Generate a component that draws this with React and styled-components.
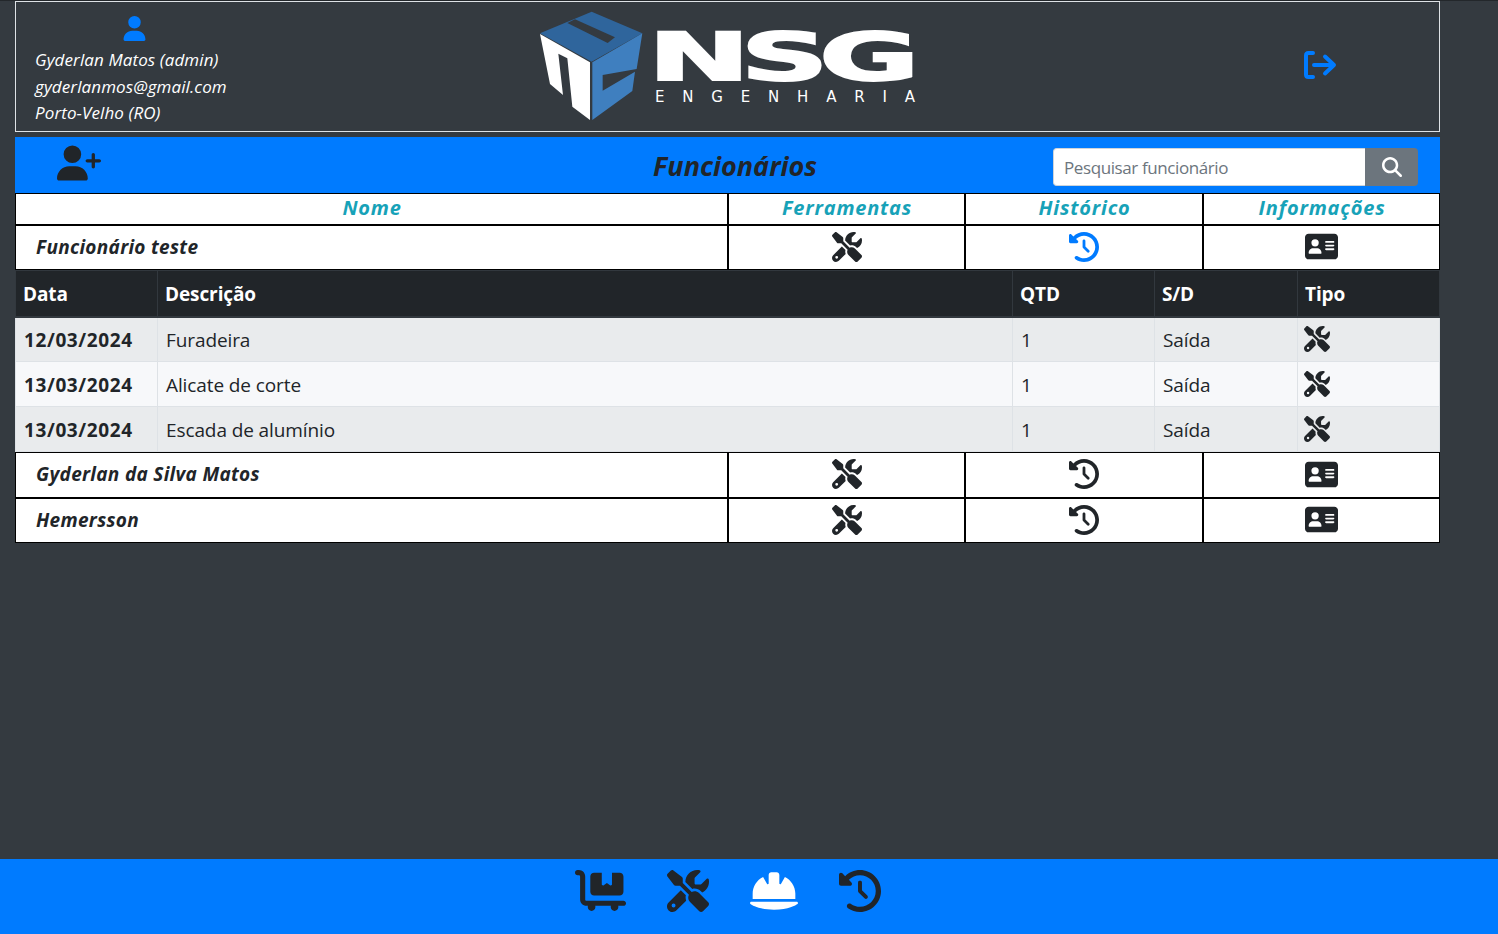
import React from "react";
import styled, { createGlobalStyle } from "styled-components";
import {
  FaUser,
  FaUserPlus,
  FaScrewdriverWrench,
  FaClockRotateLeft,
  FaAddressCard,
  FaCartFlatbed,
  FaHelmetSafety,
  FaMagnifyingGlass,
} from "react-icons/fa6";

const GlobalStyle = createGlobalStyle`
  html, body {
    margin: 0;
    padding: 0;
    height: 100%;
    background: #343a40;
  }
  body {
    font-family: "Open Sans", "Noto Sans", "Liberation Sans", sans-serif;
    font-size: 16px;
    color: #212529;
  }
  * { box-sizing: border-box; }
`;

const Page = styled.div`
  width: 1498px;
  height: 934px;
  display: flex;
  flex-direction: column;
  overflow: hidden;
  border-top: 1px solid #23272b;
`;

const Content = styled.main`
  flex: 1;
  width: 1425px;
  margin-left: 15px;
`;

const Header = styled.header`
  height: 131px;
  border: 1px solid #dee2e6;
  display: grid;
  grid-template-columns: 504px 420px 1fr;
  align-items: center;
`;

const UserInfo = styled.div`
  padding: 11px 0 0 19px;
  color: #fff;
  font-size: 17px;
  font-style: italic;
  letter-spacing: 0.1px;
  line-height: 26.5px;
`;

const UserIcon = styled.div`
  width: 198px;
  height: 30px;
  margin-top: -1px;
  margin-bottom: 1px;
  display: flex;
  justify-content: center;
  font-size: 25px;
  color: #007bff;
`;

const LogoBox = styled.div`
  height: 129px;
  display: flex;
  align-items: center;
`;

const Logout = styled.div`
  display: flex;
  justify-content: center;
  padding: 0 0 4px 261px;
  color: #007bff;
`;

const TitleBar = styled.div`
  margin-top: 5px;
  height: 56px;
  padding-top: 3px;
  background: #007bff;
  display: grid;
  grid-template-columns: 1037px 1fr;
  align-items: center;
`;

const TitleLeft = styled.div`
  display: flex;
  align-items: center;
`;

const AddUser = styled.span`
  display: flex;
  margin: -7px 0 0 42px;
  font-size: 44px;
  color: #212529;
`;

const Title = styled.h1`
  margin: -2px 0 0 552px;
  font-size: 27px;
  font-style: italic;
  font-weight: 700;
  color: #212529;
`;

const Search = styled.div`
  display: flex;
  width: 365px;
  height: 38px;
  margin-left: 1px;
`;

const SearchInput = styled.input`
  flex: 1;
  min-width: 0;
  border: 1px solid #ced4da;
  border-right: none;
  border-radius: 4px 0 0 4px;
  padding: 2px 10px 0;
  font: 400 17px "Open Sans", sans-serif;
  letter-spacing: -0.4px;
  &::placeholder { color: #6c757d; opacity: 1; }
`;

const SearchButton = styled.button`
  width: 53px;
  border: 0;
  border-radius: 0 4px 4px 0;
  background: #6c757d;
  color: #fff;
  font-size: 20px;
  display: flex;
  align-items: center;
  justify-content: center;
  padding: 0;
`;

const StaffTable = styled.div`
  background: #fff;
`;

const StaffRow = styled.div`
  display: grid;
  grid-template-columns: 711px 237px 238px 237px;
  height: ${(p) => p.$height}px;
  border-left: 1px solid #000;
  border-right: 1px solid #000;
  border-top: ${(p) => p.$top}px solid #000;
  border-bottom: ${(p) => p.$bottom}px solid #000;
`;

const StaffCell = styled.div`
  display: flex;
  align-items: center;
  justify-content: center;
  padding-bottom: 2px;
  font-size: 30px;
  color: ${(p) => (p.$active ? "#007bff" : "#212529")};
  & + & { border-left: 2px solid #000; }
`;

const HeadLabel = styled.span`
  margin: 0 0 1px 1px;
  font-size: 20px;
  font-style: italic;
  font-weight: 700;
  letter-spacing: 0.8px;
  color: #17a2b8;
`;

const StaffName = styled.div`
  width: 100%;
  padding-left: 20px;
  font-size: 19px;
  font-style: italic;
  font-weight: 700;
  letter-spacing: 0.3px;
  color: #212529;
`;

const Movements = styled.table`
  width: 100%;
  border-collapse: collapse;
  table-layout: fixed;
  font-size: 19px;
  letter-spacing: -0.1px;
`;

const Th = styled.th`
  height: 46px;
  padding: 2px 7px 0;
  text-align: left;
  font-weight: 700;
  background: #212529;
  color: #fff;
  border: 1px solid #32383e;
  border-bottom-width: 2px;
  font-size: 19px;
`;

const Td = styled.td`
  height: 45px;
  padding: 2px 8px 0;
  border: 1px solid #dee2e6;
  background: ${(p) => (p.$odd ? "#e9ebed" : "#f7f8fa")};
  font-weight: ${(p) => (p.$strong ? 700 : 400)};
  letter-spacing: ${(p) => (p.$strong ? "0.6px" : "inherit")};
  color: #212529;
`;

const TypeIcon = styled.span`
  display: block;
  font-size: 26px;
  height: 26px;
  margin: -7px 0 0 -2px;
`;

const Footer = styled.footer`
  height: 75px;
  background: #007bff;
  display: flex;
  justify-content: center;
  align-items: flex-start;
  padding-top: 6px;
`;

const FooterIcons = styled.nav`
  display: flex;
  align-items: center;
  gap: 41px;
  margin-left: -43px;
  color: #212529;
`;

const HatIcon = styled.span`
  display: flex;
  color: #fff;
`;

const LogoutIcon = () => (
  <svg width="34" height="30" viewBox="0 0 34 30" fill="none" stroke="#007bff" strokeWidth="4" strokeLinecap="round" strokeLinejoin="round">
    <path d="M10 3H5.5Q3 3 3 5.5v19Q3 27 5.5 27H10" />
    <path d="M11 15h19M22 6.5l9 8.5-9 8.5" />
  </svg>
);

const Logo = () => (
  <svg width="420" height="129" viewBox="0 0 420 129">
    <g transform="translate(15 3) scale(0.3333)">
      <polygon points="15,85 170,20 322,85 170,170" fill="#2f659c" />
      <polygon points="97,54 120,43 240,97 218,114" fill="#343a40" />
      <polygon points="15,87 165,172 165,345 112,305 97,160 70,146 84,270 45,237" fill="#fff" />
      <polygon points="172,172 322,85 305,192 203,210 203,257 300,200 292,258 172,345" fill="#3f7fbf" />
    </g>
    <text x="128" y="78" textLength="262" lengthAdjust="spacingAndGlyphs" fontFamily="'DejaVu Sans', sans-serif" fontWeight="700" fontSize="65" letterSpacing="-5" stroke="#fff" strokeWidth="2" fill="#fff">NSG</text>
    <text x="135" y="100" textLength="260" fontFamily="'DejaVu Sans', sans-serif" fontSize="15" fill="#fff">ENGENHARIA</text>
  </svg>
);

const movements = [
  ["12/03/2024", "Furadeira"],
  ["13/03/2024", "Alicate de corte"],
  ["13/03/2024", "Escada de alumínio"],
];

const PersonRow = ({ name, height, top, bottom, active }) => (
  <StaffRow $height={height} $top={top} $bottom={bottom}>
    <StaffCell><StaffName>{name}</StaffName></StaffCell>
    <StaffCell><FaScrewdriverWrench /></StaffCell>
    <StaffCell $active={active}><FaClockRotateLeft /></StaffCell>
    <StaffCell><FaAddressCard style={{ fontSize: 33 }} /></StaffCell>
  </StaffRow>
);

export default function App() {
  return (
    <Page>
      <GlobalStyle />
      <Content>
        <Header>
          <UserInfo>
            <UserIcon><FaUser /></UserIcon>
            <div>Gyderlan Matos (admin)</div>
            <div>gyderlanmos@gmail.com</div>
            <div>Porto-Velho (RO)</div>
          </UserInfo>
          <LogoBox><Logo /></LogoBox>
          <Logout><LogoutIcon /></Logout>
        </Header>
        <TitleBar>
          <TitleLeft>
            <AddUser><FaUserPlus /></AddUser>
            <Title>Funcionários</Title>
          </TitleLeft>
          <Search>
            <SearchInput placeholder="Pesquisar funcionário" />
            <SearchButton><FaMagnifyingGlass /></SearchButton>
          </Search>
        </TitleBar>
        <StaffTable>
          <StaffRow $height={31} $top={1} $bottom={0}>
            <StaffCell><HeadLabel>Nome</HeadLabel></StaffCell>
            <StaffCell><HeadLabel>Ferramentas</HeadLabel></StaffCell>
            <StaffCell><HeadLabel>Histórico</HeadLabel></StaffCell>
            <StaffCell><HeadLabel>Informações</HeadLabel></StaffCell>
          </StaffRow>
          <PersonRow name="Funcionário teste" height={46} top={2} bottom={1} active />
          <Movements>
            <colgroup>
              <col width="142" />
              <col />
              <col width="142" />
              <col width="143" />
              <col width="142" />
            </colgroup>
            <thead>
              <tr>
                <Th>Data</Th>
                <Th>Descrição</Th>
                <Th>QTD</Th>
                <Th>S/D</Th>
                <Th>Tipo</Th>
              </tr>
            </thead>
            <tbody>
              {movements.map(([date, item], i) => (
                <tr key={item}>
                  <Td $odd={i % 2 === 0} $strong>{date}</Td>
                  <Td $odd={i % 2 === 0}>{item}</Td>
                  <Td $odd={i % 2 === 0}>1</Td>
                  <Td $odd={i % 2 === 0}>Saída</Td>
                  <Td $odd={i % 2 === 0}><TypeIcon><FaScrewdriverWrench /></TypeIcon></Td>
                </tr>
              ))}
            </tbody>
          </Movements>
          <PersonRow name="Gyderlan da Silva Matos" height={46} top={1} bottom={1} />
          <PersonRow name="Hemersson" height={45} top={1} bottom={1} />
        </StaffTable>
      </Content>
      <Footer>
        <FooterIcons>
          <FaCartFlatbed size={51} />
          <FaScrewdriverWrench size={42} />
          <HatIcon><FaHelmetSafety size={48} /></HatIcon>
          <FaClockRotateLeft size={42} />
        </FooterIcons>
      </Footer>
    </Page>
  );
}
